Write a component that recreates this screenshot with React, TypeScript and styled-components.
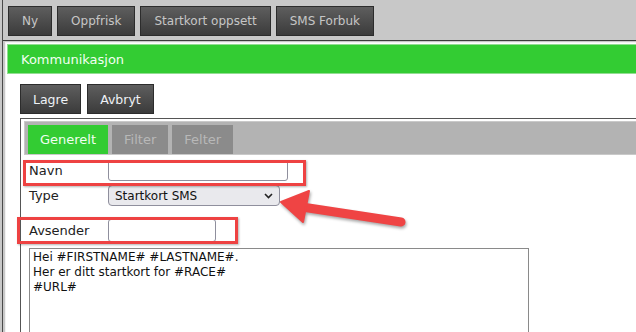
import React from 'react'
import styled, { createGlobalStyle } from 'styled-components'

const GlobalStyle = createGlobalStyle`
    body {
        margin: 0;
        background: #c8c8c8;
        font-family: 'DejaVu Sans', Verdana, sans-serif;
    }
`

const Page = styled.div`
    position: relative;
    width: 636px;
    height: 332px;
    overflow: hidden;
    background: #c8c8c8;
`

const Workspace = styled.div`
    margin-left: 2px;
    height: 100%;
    border-left: 1px solid #4a4a4a;
    display: flex;
    flex-direction: column;
`

const Toolbar = styled.div`
    display: flex;
    column-gap: 5px;
    padding: 6px 0 0 5px;
    height: 30px;
`

const DarkButton = styled.button`
    height: 30px;
    padding: 0 ${p => (p.$light ? '12px' : '13px')};
    border: 1px solid #2c2c2c;
    background: linear-gradient(#5e5e5e, #3b3b3b);
    color: ${p => (p.$light ? '#eef2f6' : '#c6c6c6')};
    font-family: 'DejaVu Sans', Verdana, sans-serif;
    font-size: ${p => (p.$light ? '12.5px' : '12px')};
    cursor: pointer;
    white-space: nowrap;
`

const GridHeader = styled.div`
    margin-top: 4px;
    height: 4px;
    background: #585858;
    border-top: 1px solid #3c3c3c;
    display: flex;
`

const GridCell = styled.div`
    width: ${p => p.$w}px;
    border-right: 1px solid #8a8a8a;
`

const Dialog = styled.div`
    margin: 1px -20px 0 2px;
    flex: 1;
    background: #fff;
    border: 1px solid #f2f2f2;
    padding: 1px;
    display: flex;
    flex-direction: column;
`

const DialogTitle = styled.div`
    height: 28px;
    background: #33cc33;
    border: 1px solid #92dd92;
    color: #f2fff2;
    font-size: 13px;
    display: flex;
    align-items: center;
    padding-left: 13px;
`

const DialogBody = styled.div`
    padding: 10px 0 0 13px;
    display: flex;
    flex-direction: column;
    row-gap: 4px;
`

const ActionRow = styled.div`
    display: flex;
    column-gap: 6px;
`

const TabPanel = styled.div`
    border: 1px solid #555;
    border-right: none;
    padding: 2px 0 0 3px;
    height: 220px;
`

const TabBar = styled.div`
    background: #b3b3b3;
    border: 1px solid #c9c9c9;
    border-right: none;
    padding: 3px 0 0 3px;
    display: flex;
    column-gap: 4px;
`

const Tab = styled.div`
    height: 29px;
    padding: 0 12px;
    display: flex;
    align-items: center;
    font-size: 13px;
    background: ${p => (p.$active ? '#33cc33' : '#8b8b8b')};
    color: ${p => (p.$active ? '#f0fff0' : '#b8b8b8')};
`

const Form = styled.div`
    padding: 5px 0 0 5px;
    display: flex;
    flex-direction: column;
`

const FieldRow = styled.div`
    display: flex;
    align-items: center;
    height: ${p => p.$h || 21}px;
    margin-top: ${p => p.$top || 0}px;
`

const Label = styled.div`
    width: 79px;
    font-size: 13px;
    line-height: 16px;
    color: #222;
`

const TextInput = styled.input`
    box-sizing: border-box;
    margin: 0;
    width: ${p => p.$w}px;
    height: ${p => p.$h || 21}px;
    border: 1px solid #8f8f9d;
    border-radius: 3px;
    background: #fff;
`

const Select = styled.div`
    box-sizing: border-box;
    width: 172px;
    height: 21px;
    border: 1px solid #8f8f9d;
    border-radius: 4px;
    background: #e9e9ed;
    display: flex;
    align-items: center;
    justify-content: space-between;
    padding: 0 6px 0 6px;
    font-size: 12px;
    color: #111;
`

const MessageBox = styled.textarea`
    box-sizing: border-box;
    display: block;
    margin: 6px 0 0 0;
    width: 500px;
    height: 120px;
    border: 1px solid #8a8a8a;
    padding: 1px 3px;
    font-family: 'DejaVu Sans', Verdana, sans-serif;
    font-size: 12px;
    line-height: 15px;
    color: #111;
    resize: none;
`

const Highlight = styled.div`
    position: absolute;
    left: ${p => p.$x}px;
    top: ${p => p.$y}px;
    width: ${p => p.$w}px;
    height: ${p => p.$h}px;
    box-sizing: border-box;
    border: 3px solid #ee4242;
    box-shadow: 1px 1px 2px rgba(0, 0, 0, 0.3);
`

const Arrow = styled.svg`
    position: absolute;
    left: 0;
    top: 0;
    filter: drop-shadow(1px 2px 1.5px rgba(0, 0, 0, 0.35));
`

export default function App() {
    return (
        <Page>
            <GlobalStyle />
            <Workspace>
                <Toolbar>
                    <DarkButton>Ny</DarkButton>
                    <DarkButton>Oppfrisk</DarkButton>
                    <DarkButton>Startkort oppsett</DarkButton>
                    <DarkButton>SMS Forbuk</DarkButton>
                </Toolbar>
                <GridHeader>
                    <GridCell $w={5} />
                    <GridCell $w={21} />
                    <GridCell $w={18} />
                    <GridCell $w={590} />
                </GridHeader>
                <Dialog>
                    <DialogTitle>Kommunikasjon</DialogTitle>
                    <DialogBody>
                        <ActionRow>
                            <DarkButton $light>Lagre</DarkButton>
                            <DarkButton $light>Avbryt</DarkButton>
                        </ActionRow>
                        <TabPanel>
                            <TabBar>
                                <Tab $active>Generelt</Tab>
                                <Tab>Filter</Tab>
                                <Tab>Felter</Tab>
                            </TabBar>
                            <Form>
                                <FieldRow>
                                    <Label>Navn</Label>
                                    <TextInput $w={180} />
                                </FieldRow>
                                <FieldRow $top={4}>
                                    <Label>Type</Label>
                                    <Select>
                                        <span>Startkort SMS</span>
                                        <svg width="9" height="6" viewBox="0 0 9 6">
                                            <path d="M1 1 L4.5 4.5 L8 1" fill="none" stroke="#222" strokeWidth="1.6" />
                                        </svg>
                                    </Select>
                                </FieldRow>
                                <FieldRow $top={13} $h={23}>
                                    <Label>Avsender</Label>
                                    <TextInput $w={108} $h={23} />
                                </FieldRow>
                                <MessageBox
                                    readOnly
                                    value={'Hei #FIRSTNAME# #LASTNAME#.\nHer er ditt startkort for #RACE#\n#URL#'}
                                />
                            </Form>
                        </TabPanel>
                    </DialogBody>
                </Dialog>
            </Workspace>
            <Highlight $x={23} $y={160} $w={283} $h={26} />
            <Highlight $x={17} $y={217} $w={221} $h={27} />
            <Arrow width="636" height="332">
                <line x1="302" y1="207" x2="401" y2="222" stroke="#ef4444" strokeWidth="9" strokeLinecap="round" />
                <polygon points="281,202 309,191 303,222" fill="#ef4444" stroke="#ef4444" strokeWidth="2" strokeLinejoin="round" />
            </Arrow>
        </Page>
    )
}
